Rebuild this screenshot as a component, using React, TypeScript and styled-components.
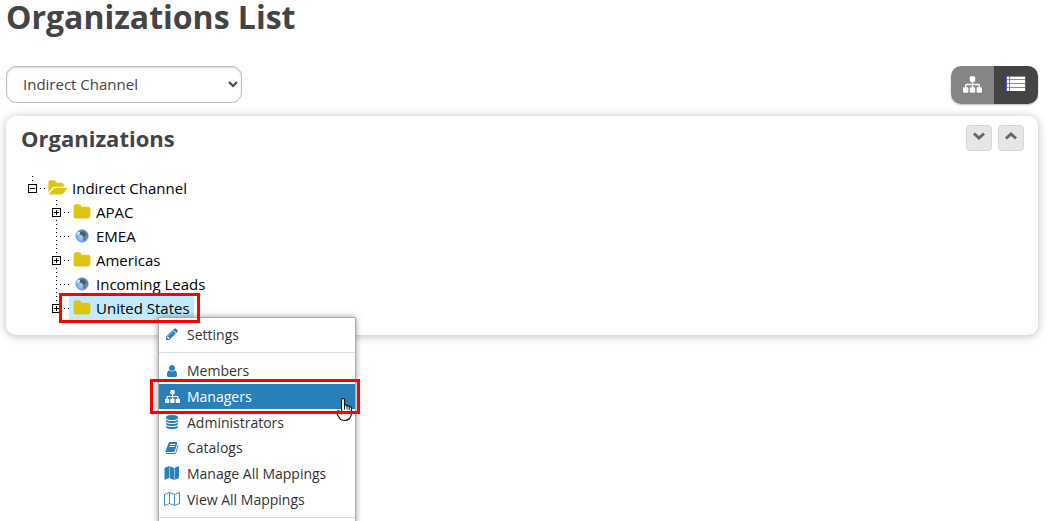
import React from 'react';
import styled, { createGlobalStyle } from 'styled-components';

const GlobalStyle = createGlobalStyle`
  *, *::before, *::after { box-sizing: border-box; }
  body { margin: 0; background: #fff; }
  body, button, select { font-family: 'Open Sans', 'Liberation Sans', sans-serif; }
`;

const Page = styled.main`
  height: 100vh;
  overflow: hidden;
  padding: 0 9px 0 6px;
  color: #444;
`;

const Title = styled.h1`
  margin: 0 0 32px;
  font-size: 32px;
  line-height: 34px;
  font-weight: 700;
`;

const Toolbar = styled.div`
  display: flex;
  justify-content: space-between;
  align-items: flex-start;
  margin-bottom: 12px;
`;

const ChannelSelect = styled.select`
  width: 236px;
  height: 37px;
  padding: 0 0 2px 12px;
  border: 1px solid #bbb;
  border-radius: 10px;
  background: #fff;
  box-shadow: inset 0 1px 2px #ddd;
  color: #444;
  font-size: 15px;
`;

const ToggleGroup = styled.div`
  display: flex;
  border-radius: 10px;
  overflow: hidden;
  box-shadow: 0 1px 2px #0004;
`;

const ToggleButton = styled.button<{ $active?: boolean }>`
  display: flex;
  align-items: center;
  justify-content: center;
  width: ${p => (p.$active ? 44 : 43)}px;
  height: 38px;
  padding: 0 0 2px;
  border: 0;
  background: ${p => (p.$active ? '#444' : '#858585')};
  color: #fff;
`;

const Panel = styled.section`
  min-height: 219px;
  padding: 9px 14px 14px 15px;
  border-radius: 10px;
  background: #fff;
  box-shadow: 0 1px 10px #0004;
`;

const PanelHeader = styled.header`
  display: flex;
  justify-content: space-between;
  align-items: flex-start;
  margin-bottom: 25px;
`;

const PanelTitle = styled.h2`
  margin: 0;
  font-size: 22px;
  line-height: 26px;
  font-weight: 700;
`;

const HeaderButtons = styled.div`
  display: flex;
  gap: 6px;
`;

const SmallButton = styled.button`
  display: flex;
  align-items: center;
  justify-content: center;
  width: 26px;
  height: 26px;
  padding: 0 0 4px;
  border: 1px solid #d4d4d4;
  border-radius: 4px;
  background: #e6e6e6;
  color: #666;
`;

const Tree = styled.ul`
  margin: 0;
  padding: 0 0 0 5px;
  list-style: none;
  color: #000;
  font-size: 15px;
  line-height: 24px;
`;

const Branch = styled.ul`
  margin: 0;
  padding: 0 0 0 24px;
  list-style: none;
`;

const Node = styled.li`
  position: relative;
`;

const NodeRow = styled.div`
  display: flex;
  height: 24px;
`;

const NodeLabel = styled.span<{ $selected?: boolean }>`
  display: flex;
  align-items: center;
  gap: 5px;
  padding: 0 4px 0 3px;
  border-radius: 2px;
  background: ${p => (p.$selected ? '#beebff' : 'transparent')};
  white-space: nowrap;
`;

const NodeIcon = styled.span`
  display: flex;
  align-items: center;
  justify-content: center;
  width: 19px;
  color: #dec50f;
`;

const Highlight = styled.div`
  position: absolute;
  border: 3px solid #f00;
  pointer-events: none;
  z-index: 3;
`;

const NodeHighlight = styled(Highlight)`
  left: 9px;
  top: -3px;
  width: 141px;
  height: 30px;
`;

const ItemHighlight = styled(Highlight)`
  left: -9px;
  top: -5px;
  width: 210px;
  height: 35px;
`;

const Menu = styled.div`
  position: absolute;
  left: 108px;
  top: 21px;
  z-index: 2;
  width: 198px;
  padding: 3px 0;
  border: 1px solid #aaa;
  border-radius: 2px;
  background: #fff;
  box-shadow: 0 0 6px #0006;
`;

const MenuGroup = styled.div`
  display: grid;
  grid-auto-rows: 1fr;
  height: 154px;
`;

const Separator = styled.hr`
  height: 1px;
  margin: 5px 0;
  border: 0;
  background: #ddd;
`;

const MenuItem = styled.button<{ $active?: boolean; $single?: boolean }>`
  position: relative;
  display: flex;
  align-items: center;
  gap: 6px;
  width: 100%;
  height: ${p => (p.$single ? '26px' : 'auto')};
  padding: 0 4px;
  border: 0;
  background: ${p => (p.$active ? '#2980b9' : 'transparent')};
  color: ${p => (p.$active ? '#fff' : '#333')};
  font-size: 14px;
  line-height: 25px;
  text-align: left;
  white-space: nowrap;
`;

const MenuIcon = styled.span<{ $active?: boolean }>`
  display: flex;
  align-items: center;
  justify-content: center;
  width: 18px;
  color: ${p => (p.$active ? '#fff' : '#2980b9')};
`;

const Pointer = styled.svg`
  position: absolute;
  left: 176px;
  top: 13px;
  z-index: 2;
`;

const paths = {
  sitemap: 'M1792 1248v320q0 40-28 68t-68 28h-320q-40 0-68-28t-28-68v-320q0-40 28-68t68-28h96v-192h-512v192h96q40 0 68 28t28 68v320q0 40-28 68t-68 28h-320q-40 0-68-28t-28-68v-320q0-40 28-68t68-28h96v-192h-512v192h96q40 0 68 28t28 68v320q0 40-28 68t-68 28h-320q-40 0-68-28t-28-68v-320q0-40 28-68t68-28h96v-192q0-52 38-90t90-38h512v-192h-96q-40 0-68-28t-28-68v-320q0-40 28-68t68-28h320q40 0 68 28t28 68v320q0 40-28 68t-68 28h-96v192h512q52 0 90 38t38 90v192h96q40 0 68 28t28 68z',
  user: 'M1536 1399q0 109-62.5 187t-150.5 78h-854q-88 0-150.5-78t-62.5-187q0-85 8.5-160.5t31.5-152 58.5-131 94-89 134.5-34.5q131 128 313 128t313-128q76 0 134.5 34.5t94 89 58.5 131 31.5 152 8.5 160.5zm-256-887q0 159-112.5 271.5t-271.5 112.5-271.5-112.5-112.5-271.5 112.5-271.5 271.5-112.5 271.5 112.5 112.5 271.5z',
  pencil: 'M491 1536l91-91-235-235-91 91v107h128v128h107zm523-928q0-22-22-22-10 0-17 7l-542 542q-7 7-7 17 0 22 22 22 10 0 17-7l542-542q7-7 7-17zm-54-192l416 416-832 832h-416v-416zm683 96q0 53-37 90l-166 166-416-416 166-165q36-38 90-38 53 0 91 38l235 234q37 39 37 91z',
  database: 'M896 768q237 0 443-43t325-127v170q0 69-103 128t-280 93.5-385 34.5-385-34.5-280-93.5-103-128v-170q119 84 325 127t443 43zm0 768q237 0 443-43t325-127v170q0 69-103 128t-280 93.5-385 34.5-385-34.5-280-93.5-103-128v-170q119 84 325 127t443 43zm0-384q237 0 443-43t325-127v170q0 69-103 128t-280 93.5-385 34.5-385-34.5-280-93.5-103-128v-170q119 84 325 127t443 43zm0-1152q208 0 385 34.5t280 93.5 103 128v128q0 69-103 128t-280 93.5-385 34.5-385-34.5-280-93.5-103-128v-128q0-69 103-128t280-93.5 385-34.5z',
  book: 'M1703 478q40 57 18 129l-275 906q-19 64-76.5 107.5t-122.5 43.5h-923q-77 0-148.5-53.5t-99.5-131.5q-24-67-2-127 0-4 3-27t4-37q1-8-3-21.5t-3-19.5q2-11 8-21t16.5-23.5 16.5-23.5q23-38 45-91.5t30-91.5q3-10 .5-30t-.5-28q3-11 17-28t17-23q21-36 42-92t25-90q1-9-2.5-32t.5-28q4-13 22-30.5t22-22.5q19-26 42.5-84.5t27.5-96.5q1-8-3-25.5t-2-26.5q2-8 9-18t18-23 17-21q8-12 16.5-30.5t15-35 16-36 19.5-32 26.5-23.5 36-11.5 47.5 5.5l-1 3q38-9 51-9h761q74 0 114 56t18 130l-274 906q-36 119-71.5 153.5t-128.5 34.5h-869q-27 0-38 15-11 16-1 43 24 70 144 70h923q29 0 56-15.5t35-41.5l300-987q7-22 5-57 38 15 59 43zm-1064 2q-4 13 2 22.5t20 9.5h608q13 0 25.5-9.5t16.5-22.5l21-64q4-13-2-22.5t-20-9.5h-608q-13 0-25.5 9.5t-16.5 22.5zm-83 256q-4 13 2 22.5t20 9.5h608q13 0 25.5-9.5t16.5-22.5l21-64q4-13-2-22.5t-20-9.5h-608q-13 0-25.5 9.5t-16.5 22.5z',
  folder: 'M1728 608v704q0 92-66 158t-158 66h-1216q-92 0-158-66t-66-158v-960q0-92 66-158t158-66h320q92 0 158 66t66 158v32h672q92 0 158 66t66 158z',
  folderOpen: 'M1815 952q0 31-31 66l-336 396q-43 51-120.5 86.5t-143.5 35.5h-1088q-34 0-60.5-13t-26.5-43q0-31 31-66l336-396q43-51 120.5-86.5t143.5-35.5h1088q34 0 60.5 13t26.5 43zm-343-344v160h-832q-94 0-197 47.5t-164 119.5l-337 396-5 6q0-4-.5-12.5t-.5-12.5v-960q0-92 66-158t158-66h320q92 0 158 66t66 158v32h544q92 0 158 66t66 158z',
};

const Glyph = ({ name, size }: { name: keyof typeof paths; size: number }) => (
  <svg width={size} height={size} viewBox="0 0 1792 1792" fill="currentColor" overflow="visible" aria-hidden="true">
    <path d={paths[name]} />
  </svg>
);

const MapGlyph = ({ outline }: { outline?: boolean }) => (
  <svg width="18" height="16" viewBox="0 0 18 16" aria-hidden="true" stroke="currentColor" fill="none">
    {outline ? (
      <path d="M1.5 3.5L6.5 1.5l5 2 5-2v11L11.5 14.5l-5-2-5 2zM6.5 1.5v11M11.5 3.5v11" strokeWidth="0.9" />
    ) : (
      <path stroke="none" fill="currentColor" d="M1.5 3L6 1v12l-4.500 2zM6.500 1l4.500 2v12l-4.500-2zM11.500 3L16 1v12l-4.500 2z" />
    )}
  </svg>
);

const Chevron = ({ up }: { up?: boolean }) => (
  <svg width="14" height="10" viewBox="0 0 14 10" fill="none" stroke="currentColor" strokeWidth="3" aria-hidden="true">
    <path d={up ? 'M2 7.5L7 3l5 4.5' : 'M2 2.5L7 7l5-4.5'} />
  </svg>
);

const ListGlyph = () => (
  <svg width="20" height="16" viewBox="0 0 20 16" fill="#fff" aria-hidden="true">
    <path d="M0 0h20v15H0z" fill="#8d8d8d" />
    <path d="M0 1h3v2H0zM4 1h15v2H4zM0 4h3v3H0zM4 4h15v3H4zM0 8h3v3H0zM4 8h15v3H4zM0 12h3v3H0zM4 12h15v3H4z" />
    <path d="M0 0h1v15H0z" fill="#5a5ae0" />
    <path d="M3 0h1v15H3z" fill="#3f8fd0" />
    <path d="M19 0h1v15H19z" fill="#a04a40" />
  </svg>
);

const Globe = () => (
  <svg width="14" height="14" viewBox="0 0 14 14" aria-hidden="true">
    <defs>
      <radialGradient id="sea" cx="0.4" cy="0.6" r="0.7">
        <stop offset="0" stopColor="#a5d2f8" />
        <stop offset="0.6" stopColor="#5f9be0" />
        <stop offset="1" stopColor="#3f6fb8" />
      </radialGradient>
    </defs>
    <circle cx="7" cy="7" r="6.5" fill="url(#sea)" />
    <path d="M5 3l3-1 2.500 2 .5 2.500-1 2-1.500-.5-1.500-2-2-.5z" fill="#5c5a50" />
    <path d="M8 8l2.500 1-.5 2-1.500.5z" fill="#6d7350" />
    <path d="M2 4l2-1.500 1 1-1 2-2 .5z" fill="#d5e9fa" />
  </svg>
);

type Kind = 'plus' | 'minus' | 'leaf';

/* Dotted connector lines with the expand box drawn over them. */
const Connector = ({ kind, last }: { kind: Kind; last?: boolean }) => (
  <svg width="19" height="24" viewBox="0 0 19 24" shapeRendering="crispEdges" fill="none" stroke="#000" aria-hidden="true">
    <path d={kind === 'minus' ? 'M6.500 0V8' : last ? 'M6.500 0V12' : 'M6.500 0V24'} strokeDasharray="1 3" />
    <path d="M10 12.500H19" strokeDasharray="1 3" />
    {kind !== 'leaf' && <path d="M2.500 8.500h8v8h-8z" fill="#fff" />}
    {kind !== 'leaf' && <path d="M4 12.500h5" />}
    {kind === 'plus' && <path d="M6.500 10v5" />}
  </svg>
);

const nodes = [
  { label: 'APAC', folder: true },
  { label: 'EMEA', folder: false },
  { label: 'Americas', folder: true },
  { label: 'Incoming Leads', folder: false },
  { label: 'United States', folder: true, selected: true },
];

const menuItems = [
  { label: 'Members', icon: <Glyph name="user" size={14} /> },
  { label: 'Managers', icon: <Glyph name="sitemap" size={15} />, active: true },
  { label: 'Administrators', icon: <Glyph name="database" size={14} /> },
  { label: 'Catalogs', icon: <Glyph name="book" size={14} /> },
  { label: 'Manage All Mappings', icon: <MapGlyph /> },
  { label: 'View All Mappings', icon: <MapGlyph outline /> },
];

const ContextMenu = () => (
  <Menu role="menu">
    <MenuItem role="menuitem" $single>
      <MenuIcon><Glyph name="pencil" size={14} /></MenuIcon>
      Settings
    </MenuItem>
    <Separator />
    <MenuGroup role="group">
      {menuItems.map(item => (
        <MenuItem key={item.label} role="menuitem" $active={item.active}>
          <MenuIcon $active={item.active}>{item.icon}</MenuIcon>
          {item.label}
          {item.active && <ItemHighlight />}
          {item.active && (
            <Pointer width="19" height="25" viewBox="0 0 19 25" aria-hidden="true">
              <path
                d="M6.500 14.500V3Q6.500 1.500 8 1.500T9.500 3v5q1.700-.6 2.500.8 1.800-.5 2.500 1 2-.3 2 1.700V16q0 3.500-2 5.500-2 2-5 2-3.500 0-5-2.500l-2.500-4Q1.200 14.500 2.500 14q1.500-.3 2.500 1l1.500 1.500z"
                fill="#fff"
                stroke="#111"
                strokeWidth="1.200"
              />
              <path d="M9.500 8v4.500M12 9v3.500M14.300 10v3" stroke="#111" fill="none" />
            </Pointer>
          )}
        </MenuItem>
      ))}
    </MenuGroup>
    <Separator />
  </Menu>
);

export default function App() {
  return (
    <Page>
      <GlobalStyle />
      <Title>Organizations List</Title>
      <Toolbar>
        <ChannelSelect aria-label="Channel">
          <option>Indirect Channel</option>
        </ChannelSelect>
        <ToggleGroup>
          <ToggleButton aria-label="Tree view"><Glyph name="sitemap" size={19} /></ToggleButton>
          <ToggleButton aria-label="List view" $active><ListGlyph /></ToggleButton>
        </ToggleGroup>
      </Toolbar>
      <Panel>
        <PanelHeader>
          <PanelTitle>Organizations</PanelTitle>
          <HeaderButtons>
            <SmallButton aria-label="Expand all"><Chevron /></SmallButton>
            <SmallButton aria-label="Collapse all"><Chevron up /></SmallButton>
          </HeaderButtons>
        </PanelHeader>
        <Tree>
          <Node>
            <NodeRow>
              <Connector kind="minus" />
              <NodeLabel>
                <NodeIcon><Glyph name="folderOpen" size={18} /></NodeIcon>
                Indirect Channel
              </NodeLabel>
            </NodeRow>
            <Branch>
              {nodes.map(node => (
                <Node key={node.label}>
                  <NodeRow>
                    <Connector kind={node.folder ? 'plus' : 'leaf'} last={node.selected} />
                    <NodeLabel $selected={node.selected}>
                      <NodeIcon>{node.folder ? <Glyph name="folder" size={18} /> : <Globe />}</NodeIcon>
                      {node.label}
                    </NodeLabel>
                  </NodeRow>
                  {node.selected && <NodeHighlight />}
                  {node.selected && <ContextMenu />}
                </Node>
              ))}
            </Branch>
          </Node>
        </Tree>
      </Panel>
    </Page>
  );
}
